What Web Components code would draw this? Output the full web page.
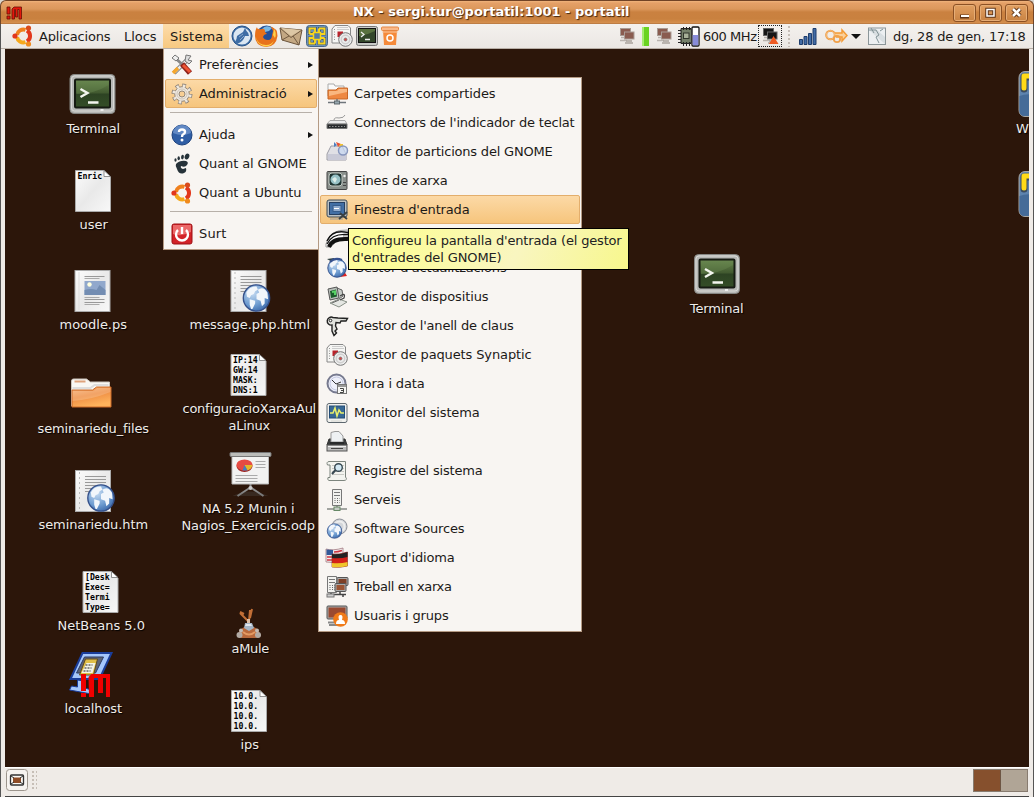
<!DOCTYPE html>
<html lang="ca">
<head>
<meta charset="utf-8">
<title>NX - portatil</title>
<style>
html,body{margin:0;height:100%;overflow:hidden;background:#d9d5cf}
body{font:13px/17px "DejaVu Sans",sans-serif;color:#1c1a18}
</style>
</head>
<body>
<nx-window></nx-window>
<script>
const make = (name, html, ready) => customElements.define(name, class extends HTMLElement {
  constructor(){ super(); this.attachShadow({mode:'open'}).innerHTML = html; }
  connectedCallback(){ if (ready) ready.call(this, this.shadowRoot); }
});

/* Shared drawings */
const page = (inner='') => `<path d="M.5.5H29L35.500 7V41.500H.5Z" fill="url(#pg)" stroke="#aaa"/>${inner}<path d="M29 .5V6.500H35.500Z" fill="#fff" stroke="#777" stroke-width=".8"/>`;
const pgDef = `<defs><linearGradient id="pg" x2="1" y2="1"><stop stop-color="#fcfcfc"/><stop offset=".5" stop-color="#e9e9e9"/><stop offset="1" stop-color="#f8f8f8"/></linearGradient></defs>`;
const mono = lines => `<g font-family="DejaVu Sans Mono,monospace" font-weight="bold" font-size="8.2" fill="#000">${lines.map((l,i)=>`<text x="2.500" y="${9+i*10}">${l}</text>`).join('')}</g>`;
const globe = (x,y,r) => `<g transform="translate(${x} ${y}) scale(${r/10})"><circle r="9.700" fill="url(#gl)" stroke="#35508a" stroke-width="1"/><path d="M-7.500-4Q-5-9 0-8.500L1-6-1-5-2-3-4-2-5 0-7-1ZM-5 1L-1 2-1 4-3 8-4 8-5 5ZM1-6Q5-9 8-4L8.500 1 6 0 6 4 4 6 3 2 0 1 0-3 2-4Z" fill="#f2f6fb"/></g>`;
const glDef = `<defs><radialGradient id="gl" cx=".35" cy=".3" r=".8"><stop stop-color="#c7dcf2"/><stop offset=".6" stop-color="#6d9bd0"/><stop offset="1" stop-color="#3663a5"/></radialGradient></defs>`;
const ubuntu = `<g transform="translate(11.500 11)"><g fill="none" stroke-width="4"><path d="M-6.500-1A6.500 6.500 0 0 1 2-6.200" stroke="#f0801d"/><path d="M3.500-5.500A6.500 6.500 0 0 1 3.500 5.500" stroke="#e2371c"/><path d="M2 6.200A6.500 6.500 0 0 1-6.500 1" stroke="#f5a81c"/></g><circle cx="-8.500" r="2.600" fill="#e2371c"/><circle cx="5" cy="-8" r="2.600" fill="#d94a1c"/><circle cx="5" cy="8" r="2.600" fill="#f08a1d"/></g>`;
const disc = (x,y,r)=>`<circle cx="${x}" cy="${y}" r="${r}" fill="#eee" stroke="#777"/><circle cx="${x}" cy="${y}" r="${r*.62}" fill="none" stroke="#cfcfcf" stroke-width="1.500"/><circle cx="${x}" cy="${y}" r="1.500" fill="#d44" stroke="#777" stroke-width=".8"/>`;
const synaptic = `<path d="M4 .5H17L19.500 3V18H1V4Z" fill="#f6f6f4" stroke="#888"/><path d="M3.500 4V16" stroke="#999" stroke-dasharray="1 1.500"/><path d="M6.500 6.500H12V12H6.500Z" fill="#b9242c"/><path d="M6 4.500H18M6 2.500H17" stroke="#ccc"/>${disc(14.500,14.500,6.800)}`;
const lines = (x,w,ys,c='#999')=>ys.map(y=>`<path d="M${x} ${y}.5H${x+w}" stroke="${c}"/>`).join('');
const wolfGlobe = `<circle cx="11" cy="11" r="10" fill="#3e6da5" stroke="#27548a"/><circle cx="11" cy="11" r="8.600" fill="#dbe7f2"/><path d="M4 17Q6 14 6 11L12 7 14 3 15.500 6Q18 8 18 11L14 11Q12 17 6.500 18.500Z" fill="#3e6da5"/><path d="M8 12L12 9M9 15L13 11" stroke="#9fbad8" stroke-width=".8"/>`;
const netPc = (c,s)=>`<path d="M2 13.500H9M3 10.500H8" stroke="#b9b3ae" stroke-width="1.500"/><rect x="2.500" y="1.500" width="10" height="7" fill="${c}" stroke="${s}"/><rect x="6.500" y="5" width="9.500" height="7" fill="${c}" stroke="${s}"/><path d="M8 14H14M7 16H15" stroke="#a9a29c" stroke-width="1.500"/>`;
const monitor = (x,y,w,h,c)=>`<rect x="${x}" y="${y}" width="${w}" height="${h}" rx="1" fill="#aaa" stroke="#555"/><rect x="${x+1.500}" y="${y+1.500}" width="${w-3}" height="${h-3}" fill="${c}"/>`;
const tower = `<path d="M1.500 .5H10.500V16.500H1.500Z" fill="#f2f2ef" stroke="#777"/><path d="M3 3.500H9M3 6.500H9" stroke="#777"/><path d="M3.500 9.500H9M3.500 11.500H9M3.500 13.500H9" stroke="#666" stroke-dasharray="1 1.500"/>`;

const ART = {
ubuntu:[22,22,ubuntu], wolf:[22,22,wolfGlobe],
firefox:[24,24,`<circle cx="12.500" cy="11.500" r="10" fill="#244f98"/><path d="M8 5Q12 0 18 4L15 7 11 8Z" fill="#77b8e6"/><path d="M3 3Q3 6 8 5 11 4 11 8L13 10Q10 10 9 13 10 16 14 16 18 16 18 11L19 7Q17 2 15 2 24 4 23.500 12 22 23 12 23 1 22 1 12Q1 6 3 3Z" fill="#e8721b"/><path d="M2 13Q4 21 12 21 18 21 20 16 18 23 11 22.500 3 21 2 13ZM20 5Q23 9 21 14L19 11Z" fill="#ffd24b"/>`],
mail:[24,22,`<path d="M1 3L23 5 20 20 3 15Z" fill="#c4a883" stroke="#6b543c"/><path d="M1 3L12 12.500 23 5M3 15L10 11M20 20L14 11" stroke="#715a41" fill="none"/><path d="M2 3L12 11 22 5Z" fill="#ddc7a5"/>`],
vm:[22,22,`<rect x=".5" y=".5" width="21" height="21" rx="3" fill="#6f91b5" stroke="#46678c"/><path d="M3 8V3.500H9.500V7.500M12.500 3.500H18.500V9H14.500M18.500 12.500V18.500H13V14.500M9.500 18.500H3.500V13H7.500M2 8.500H8M14 13.500H20M8.500 14V20M13.500 2V8" fill="none" stroke="#3f5f84" stroke-width="3"/><path d="M3.500 9V3.500H9V7.500M13 3.500H18.500V9H14.500M18.500 13V18.500H13V14.500M9 18.500H3.500V13H7.500M7.500 9H3.500M14.500 13H18.500M9 14.500V18.500M13 7.500V3.500" fill="none" stroke="#f8d51c" stroke-width="1.900"/><rect x="7.500" y="7.500" width="7" height="7" fill="#577ba2" stroke="#f8d51c" stroke-width="1.500"/>`],
synaptic:[22,22,synaptic],
term:[22,20,`<rect x=".5" y=".5" width="21" height="19" rx="2" fill="#c7c9c6" stroke="#777"/><rect x="2.500" y="2.500" width="17" height="14" fill="#33472a" stroke="#111"/><path d="M4 10Q11 9 19 5V3H3V10Z" fill="#58713f"/><path d="M5 6L8 8.500 5 11M9 13.500H14" stroke="#eee" stroke-width="1.300" fill="none"/>`],
trash:[18,20,`<path d="M2 4L3 19H15L16 4Z" fill="#f58a3a"/><rect x=".5" y="1" width="17" height="3.500" rx="1" fill="#f9b888" stroke="#e58642"/><path d="M1 6H17" stroke="#f9c9a3"/><circle cx="9" cy="12" r="3" fill="none" stroke="#fff" stroke-width="1.500"/>`],
net:[18,18,netPc('#8a5c50','#a99c95')], netbad:[18,18,netPc('#161616','#666')+`<path d="M12.500 9L17.500 17H8Z" fill="#ef5a22"/>`],
green:[7,19,`<rect width="7" height="19" fill="#6ad322"/><path d="M1 0V19" stroke="#a5ec72" stroke-width="2"/>`],
cpu:[23,21,`<path d="M4 2.500H14V17.500H4Z" fill="#65705b" stroke="#222"/><path d="M1 4.500H4M1 7.500H4M1 10.500H4M1 13.500H4M1 16.500H4M6.500 1V20M9.500 1V20M12.500 1V20" stroke="#222"/><path d="M5 4H14V16H5Z" fill="#75806a"/><rect x="6.500" y="7" width="5.500" height="5.500" fill="#a7b098" stroke="#30352b"/><rect x="15" y="1" width="7" height="19" rx="1" fill="#fff" stroke="#111" stroke-width="1.300"/><path d="M15.700 9H21.300V19.300H15.700Z" fill="#888cd8"/>`],
bars:[18,17,`<g fill="#416ba5" stroke="#1e3d6c"><path d="M.5 11.500H3.500V16.500H.5ZM5 8.500H8V16.500H5ZM9.500 5.500H12.500V16.500H9.500ZM14 .5H17V16.500H14Z"/></g>`],
key:[23,16,`<g fill="none"><circle cx="5.500" cy="7" r="4.300" stroke="#ec9132" stroke-width="2"/><circle cx="5.500" cy="7" r="4.300" stroke="#fbd5a5" stroke-width=".7"/><path d="M10 5H17V2L22 7.500 17 13V9H11" stroke="#f39b36" fill="#fbd09a" stroke-width="1.500"/><circle cx="12" cy="11" r="3.200" stroke="#f0a04a" stroke-width="1.800"/></g>`],
weather:[18,18,`<rect x=".5" y="1" width="17" height="16.500" fill="#eceff1" stroke="#8c9699"/><path d="M1 3L17 17V10L8 2Z" fill="#d8dee1"/><path d="M0 3H8L11 8 8 10 11 16M3 1L6 6M12 4L15 2" stroke="#819296" fill="none"/>`],
desk:[22,22,`<rect x=".5" y=".5" width="21" height="21" rx="3" fill="#f6f3f0" stroke="#9c958d"/><rect x="4.500" y="6" width="13" height="10" rx="1" fill="#faf8f5" stroke="#333" stroke-width="1.300"/><path d="M7 8.500H15V14H7Z" fill="#8f4c26"/><path d="M5 7L8 9M17 7L14 9M5 15L8 13M17 15L14 13" stroke="#333"/>`],
tools:[22,22,`<path d="M3 19L17 5" stroke="#777" stroke-width="4.500"/><path d="M3.500 18.500L17 5" stroke="#eee" stroke-width="2.500"/><path d="M15 1L20 2 17 6 21 7 18 10 14 7Z" fill="#ddd" stroke="#777"/><path d="M2.500 2.500L12 11" stroke="#888" stroke-width="3"/><path d="M1 4L4 1 8 4 5 7Z" fill="#eee" stroke="#777"/><path d="M11 10L19 19" stroke="#8e221b" stroke-width="5.500"/><path d="M12 11L19 18" stroke="#ee5434" stroke-width="3"/><path d="M7 14L2 19" stroke="#f5a72e" stroke-width="3.500"/>`],
gear:[22,22,`<circle cx="11" cy="11" r="8.500" fill="none" stroke="#92877b" stroke-width="4" stroke-dasharray="3.600 3.070"/><circle cx="11" cy="11" r="7.300" fill="#eee8df" stroke="#92877b"/><circle cx="11" cy="11" r="8" fill="none" stroke="#eee8df" stroke-width="3.200" stroke-dasharray="2.300 3.983" stroke-dashoffset="-.6"/><circle cx="11" cy="11" r="5" fill="none" stroke="#cfc5b8"/><circle cx="11" cy="11" r="3" fill="#f8cf94" stroke="#92877b"/>`],
help:[22,22,`<circle cx="11" cy="11" r="10" fill="#2f5ea5" stroke="#1e437e"/><path d="M2 9A9 8 0 0 1 20 9Q11 13 2 9Z" fill="#6289c4"/><path d="M8 8Q8 5.500 11 5.500 14 5.500 14 8 14 9.500 12 10.500 11 11 11 13" fill="none" stroke="#fff" stroke-width="2.400"/><circle cx="11" cy="16" r="1.500" fill="#fff"/>`],
foot:[22,22,`<g fill="#263239"><path d="M5 11Q9 7 15 8 18 9 16 12 14 15 10 13 9 15 12 16L15 15Q16 19 13 20 8 22 6 16Q4 13 5 11Z"/><ellipse cx="16" cy="3.500" rx="2.200" ry="3" transform="rotate(25 16 3.500)"/><ellipse cx="11.500" cy="4" rx="1.400" ry="2.300" transform="rotate(10 11 4)"/><ellipse cx="7.700" cy="5.300" rx="1.200" ry="2"/><ellipse cx="4.500" cy="7" rx="1.100" ry="1.700"/></g>`],
power:[22,22,`<rect x="1" y="1" width="20" height="20" rx="2" fill="#d22328" stroke="#9f1115"/><path d="M2 2H20V9Q11 14 2 11Z" fill="#eb6868"/><path d="M7 7A6 6 0 1 0 15 7M11 4V11" fill="none" stroke="#fff" stroke-width="2.400"/>`],
share:[22,22,`<path d="M2 1H8L9 3H18V13H2Z" fill="#fafafa" stroke="#aaa"/><path d="M2 16V7H10L12 5H21.500V16Z" fill="#ee8842" stroke="#c86625"/><path d="M3 8H11L13 6H21V9L3 13Z" fill="#f9b780"/><path d="M2 19.500H20M11 16V19" stroke="#6f767b" stroke-width="1.500"/><rect x="8.500" y="18" width="5" height="3" fill="#98a8b0" stroke="#5e686d"/>`],
kbd:[22,22,`<path d="M8 8Q8 5 13 6 18 6 19 3" fill="none" stroke="#999"/><path d="M4 8.500H19L21 12H1Z" fill="#eee" stroke="#aaa"/><path d="M1 12H21V16.500H1Z" fill="#282b2d" stroke="#777"/><path d="M3 14.500H19" stroke="#aaa" stroke-dasharray="1.500 1.500" stroke-width=".8"/>`],
part:[22,22,`<path d="M3 9L5 5H16L20 13V19H1V13Z" fill="#e0e0e5" stroke="#9c9ca5"/><path d="M2 13H20V19H2Z" fill="#c9cad7"/><path d="M8 1L11 4 8 6Z" fill="#4e7ec0"/><path d="M10 1L15 3 12 6Z" fill="#e85135"/><path d="M14 3H17V6L13 6Z" fill="#f2c22f"/><circle cx="17" cy="9.500" r="4.500" fill="#c7d8f1bb" stroke="#8796bd" stroke-width="1.500"/>`],
nettool:[22,22,`<rect x="1" y="1.500" width="20" height="18" rx="1" fill="#8a908c" stroke="#444"/><rect x="3" y="3" width="13" height="13" rx="3" fill="#1f3432" stroke="#c0c6c1"/><circle cx="9.500" cy="9.500" r="5" fill="#96c0c5"/><path d="M6 9L9 7 11 9 9 13Z" fill="#ddeeea"/><circle cx="18.500" cy="6" r="1.200" fill="#eee"/><path d="M17 12.500H20M17 15.500H20" stroke="#444"/>`],
login:[22,22,`<rect x="1" y="1" width="20" height="17" rx="2" fill="#b9c0c4" stroke="#3f4b54"/><rect x="3.500" y="3.500" width="15" height="12" fill="#426fa5" stroke="#263f61"/><rect x="7" y="6.500" width="8" height="6" fill="#8faacd" stroke="#365c8b"/><path d="M8 9.500H13" stroke="#fff"/><path d="M4 20H17" stroke="#999"/><path d="M13 20L21 13M14 14L21 20" stroke="#393f42" stroke-width="1.800"/>`],
arcs:[22,22,`<path d="M0 16Q3 1 22 2V6L17 8H22V11H12L5 19H0Z" fill="#fff" stroke="#999"/><g fill="none" stroke="#111"><path d="M1 13Q6 1 22 4.500" stroke-width="1.500"/><path d="M1 16Q6 5 22 6.500" stroke-width="1.300"/><path d="M3 19Q6 10 22 11" stroke-width="4"/></g>`],
update:[22,22,`${glDef}<path d="M1 2L8 1 8 6Z" fill="#344"/><path d="M14 20L21 19 18 14Z" fill="#d22"/>${globe(11,11,9.500)}<path d="M4 5Q9 0 16 3" stroke="#36518e" fill="none" stroke-width="2"/>`],
device:[22,22,`<path d="M11 2L16 4 17 10 13 13" fill="#c7cbc7" stroke="#606060"/><path d="M2 3L11 1 13 12 4 14Z" fill="#b9bfba" stroke="#555"/><path d="M4 5L10 3.500 11 10.500 5 12Z" fill="#1a5c2a"/><path d="M6 6L9 5.500V9" stroke="#58d266" stroke-width="2" fill="none"/><path d="M4 17L13 13 21 16 13 21Z" fill="#e5e7e3" stroke="#889087"/><path d="M6 17L13 14" stroke="#666"/><path d="M14 10Q20 6 18 12L14 14" fill="none" stroke="#444" stroke-width="1.200"/>`],
keys:[22,22,`<path d="M7 2.500A4 4 0 1 0 6 10L6 16 8 20.500 10.500 18 9 16 11 14 9.500 11 10 7.500 14 8 15 6 20 6 21.500 3.500 12 3Z" fill="#e1e2dd" stroke="#222" stroke-width="1.400"/><circle cx="4.500" cy="5.500" r="1.300" fill="#fff" stroke="#222"/>`],
clock:[22,22,`<circle cx="10.500" cy="10.500" r="9" fill="#eef0fa" stroke="#777a8f" stroke-width="2"/><circle cx="10.500" cy="10.500" r="6.500" fill="none" stroke="#c4c8e2"/><path d="M6 7L10 11 15 9" stroke="#333" fill="none"/><rect x="11.500" y="11.500" width="9" height="9" fill="#f6f6f3" stroke="#777"/><path d="M12 13H20" stroke="#999" stroke-width="2"/><path d="M14 15.500H17.500V19.500H14M15 17.500H17" stroke="#444" fill="none"/>`],
sysmon:[22,22,`<rect x="1" y="1.500" width="20" height="19" rx="2" fill="#f1f1ee" stroke="#5d676e"/><rect x="3.500" y="4" width="15" height="12" fill="#376894" stroke="#244d77"/><path d="M4 11H7L9 6 11 14 13 8 15 11H18" stroke="#e9ef6b" stroke-width="1.500" fill="none"/><path d="M5 19H16" stroke="#d5d6d2"/>`],
print:[22,22,`<path d="M3 8H19L21 14H1Z" fill="#393b3c" stroke="#333"/><path d="M5 1.500Q9 0 13 .5L17 5V11H5Z" fill="#eef1f3" stroke="#999"/><path d="M4 11H18V14H4Z" fill="#292b2c"/><rect x="1" y="14" width="20" height="6" fill="#bbb" stroke="#555"/><path d="M2 15.500H20" stroke="#eee"/><path d="M5 17.500H17" stroke="#444"/>`],
log:[22,22,`<path d="M3 1.500H19.500V17Q22 20 18 20.500H3Q1 20 2 17.500H4V5H1.500Q0 2 3 1.500Z" fill="#f3f4ef" stroke="#7d857e"/>${lines(6,12,[5,8,11,14],'#c8c9c4')}<circle cx="12.500" cy="7.500" r="3.800" fill="#d3e9f3" stroke="#374851" stroke-width="1.400"/><path d="M9.500 10L6 14" stroke="#374851" stroke-width="2"/>`],
server:[22,22,`<g transform="translate(5)">${tower}</g><path d="M1 20H21M11 17V20" stroke="#858985" stroke-width="1.500"/><rect x="8" y="18" width="6" height="3.500" fill="#c4cbc4" stroke="#686"/>`],
sources:[22,22,`${glDef}<circle cx="13.500" cy="8.500" r="7.500" fill="#d3d6da" stroke="#8b8e97"/><circle cx="13.500" cy="8.500" r="5" fill="none" stroke="#eee" stroke-width="2"/>${globe(8.500,13,7.500)}`],
flags:[22,22,`<path d="M0 2Q7 4 17 1V15Q7 16 0 15Z" fill="#eee" stroke="#9a6971" stroke-width=".7"/><path d="M1 10H7M1 13H7M8 5Q12 5 16 3.500" stroke="#cf3442" stroke-width="1.500" fill="none"/><path d="M.5 2.500L7 3V8L.5 8Z" fill="#315998"/><path d="M6 7Q13 8 21.500 5V19Q14 21 6 20Z" fill="#d42018" stroke="#8a372e" stroke-width=".7"/><path d="M6 7Q13 8 21.500 5V10Q14 12 6 11Z" fill="#222"/><path d="M6 16Q14 17 21.500 15V19Q14 21 6 20Z" fill="#efc42b"/>`],
network:[23,22,`${monitor(11,1.500,11,8,'#7e4026')}${tower}${monitor(9,7.500,11,8,'#9b5534')}<path d="M2 18.500H20M14 16V18M5 17V20M17 18V21" stroke="#444" stroke-width="1.500"/><rect x="1" y="18" width="7" height="3" fill="#ccc" stroke="#777"/>`],
users:[22,22,`${monitor(1,1,20,13,'#9a4930')}<path d="M2 17.500H12M3 20H12" stroke="#888" stroke-width="2"/><circle cx="14.500" cy="14.500" r="7.300" fill="#f07a18"/><path d="M10 19Q10 15 13 15 11.500 10 14.500 10 17.500 10 16 15 19 15 19 19Z" fill="#fff"/>`],
bigterm:[46,40,`<defs><linearGradient id="tg" x2="0" y2="1"><stop stop-color="#6a8850"/><stop offset=".48" stop-color="#41592f"/><stop offset=".52" stop-color="#2d4323"/><stop offset="1" stop-color="#344e27"/></linearGradient></defs><rect x=".5" y=".5" width="45" height="39" rx="4" fill="#b7b8b6" stroke="#858683"/><rect x="2" y="2" width="42" height="35" rx="3" fill="none" stroke="#d8d9d6"/><rect x="5.500" y="5.500" width="35" height="28" rx="1" fill="url(#tg)" stroke="#161b13" stroke-width="2"/><path d="M7 20Q25 20 39 11V7H7Z" fill="#698850" opacity=".45"/><path d="M11 15L18 19 11 23M18.500 28.500H29" fill="none" stroke="#f4f6ef" stroke-width="2.400"/><path d="M31 36H34" stroke="#eee" stroke-width="2"/>`],
user:[36,42,pgDef+page(mono(['Enric']))],
ps:[36,42,`${pgDef}<rect x=".5" y=".5" width="35" height="41" fill="url(#pg)" stroke="#aaa"/>${lines(10,20,[6,29,32],'#999')}${lines(10,15,[8,27,34],'#aaa')}<rect x="10" y="11" width="21" height="14" fill="#91a8cc"/><path d="M10 20Q17 18 22 20L25 15 31 20V25H10Z" fill="#738db2"/><circle cx="15" cy="14.500" r="2.200" fill="#ffffdf"/><path d="M4.500 2V40" stroke="#ddd"/>`],
folder:[42,30,`<defs><linearGradient id="fo" x2=".4" y2="1"><stop stop-color="#f7b47b"/><stop offset=".5" stop-color="#ef8f45"/><stop offset="1" stop-color="#ffb35c"/></linearGradient></defs><path d="M1 28V3Q1 1 3 1H16L20 4H39V20Z" fill="#f9f7f3" stroke="#ccc5bd"/><path d="M4 3.500H15" stroke="#dea37c" stroke-width="2"/><path d="M2 10H20L24 7H38" stroke="#ddd" stroke-width="2" fill="none"/><path d="M1.500 29V12H22L26 9H40.500V29Z" fill="url(#fo)" stroke="#cc6a28"/><path d="M2 23Q20 22 40 14V10H27L23 13H2Z" fill="#fff" opacity=".18"/>`],
html:[41,42,`${pgDef}${glDef}<rect x=".5" y=".5" width="35" height="41" fill="url(#pg)" stroke="#aaa"/>${lines(10,21,[6,9,12,15,18,21],'#999')}<path d="M4.500 2V40" stroke="#bbb" stroke-dasharray="2 3"/>${globe(26,28,13.600)}`],
conf:[36,42,pgDef+page(mono(['IP:14','GW:14','MASK:','DNS:1']))],
nb:[36,42,pgDef+page(mono(['[Desk','Exec=','Termi','Type=']))],
ips:[36,42,pgDef+page(mono(['10.0.','10.0.','10.0.','10.0.']))],
odp:[42,45,`<path d="M21 32V37M20 36L8 44M22 36L34 44" stroke="#8b8b8b" stroke-width="2"/><path d="M3 44Q21 35 39 44Z" fill="#555" opacity=".3"/><path d="M2.500 3H39V32H2.500Z" fill="#f2f2f1" stroke="#bbb"/><rect x=".5" y=".5" width="41" height="4" rx="1" fill="#bbbcb9" stroke="#777"/><ellipse cx="15" cy="14" rx="8" ry="6" fill="#9c211d"/><ellipse cx="15" cy="13" rx="8" ry="5.500" fill="#e64b43"/><path d="M15 13L23 13Q22 17 18 18.500Z" fill="#e5b92a"/><path d="M15 13L18 18.500 13 18.500Z" fill="#437fc0"/>${lines(26,10,[9,12,15],'#aaa')}${lines(6,22,[23,26,29],'#aaa')}<circle cx="21" cy="36" r="2" fill="#ccc"/>`],
mule:[26,31,`<path d="M4 5L12 13M14 2L13 13M4 4L8 6M16 1L14 10" stroke="#c26f36" stroke-width="2" fill="none"/><path d="M11 11H14V17H11Z" fill="#ddc0a8"/><path d="M4 22Q8 18 13 19 19 18 22 22L25 28 20 30H5L1 28Z" fill="#b9693c"/><path d="M9 15H16L18 20 13 23 8 20Z" fill="#a5b5c5"/><path d="M10 16H15L16 18H9Z" fill="#e2e7ee"/><circle cx="3.500" cy="27" r="3" fill="#b2aaa4"/><circle cx="22" cy="27" r="3" fill="#b2aaa4"/><circle cx="5" cy="22.500" r="2" fill="#c2bab4"/><circle cx="21" cy="22.500" r="2" fill="#c2bab4"/><path d="M7 24Q13 29 19 24" stroke="#e49a63" stroke-width="2" fill="none"/>`],
local:[46,47,`<path d="M14 2H43L31 28H2Z" fill="#a5c6fb" stroke="#1a3d9a" stroke-width="2"/><path d="M16 6H35L27 22H8Z" fill="#5f6576" stroke="#2c3c65"/><path d="M17 8H29L25 24H11Z" fill="#e1bf48" stroke="#604a1e"/><path d="M18 12H27L24 22H13Z" fill="#f4f4e7"/><path d="M17 14H24M16 17H23M15 20H22" stroke="#222" stroke-dasharray="2 1"/><path d="M9 29L16 30 13 36 23 39V43L1 39 3 35 9 36Z" fill="#a5c6fb" stroke="#1a3d9a"/><path d="M12.500 23H17.500V40H12.500ZM12.500 42H17.500V46H12.500ZM20 26L23 23H41.500V46H37.500V27H34.500V42H29.500V27H25.500V46H20.500Z" fill="#f00000"/>`],
win:[30,46,`<rect x=".5" y=".5" width="40" height="45" rx="6" fill="#5d83ae" stroke="#aaa7a1"/><path d="M1 25Q10 22 30 24V45H6Q1 45 1 40Z" fill="#456b98"/><path d="M5.500 18V6H22" fill="none" stroke="#3a4a5d" stroke-width="7" stroke-linejoin="round" stroke-linecap="round"/><path d="M5.500 17V5H22" fill="none" stroke="#ffda18" stroke-width="5" stroke-linejoin="round" stroke-linecap="round"/>`],
logo:[18,14,`<path d="M1 1H4V8H1ZM1 10H4V13H1ZM6 3L8 1H15.500V13H13V3.500H11.700V11H9.500V3.500H8.500V13H6Z" fill="#e3170c" stroke="#671006" stroke-width=".8"/>`]
};

/* One drawing out of the ART table, at its own size */
make('nx-icon', `<style>:host{display:block;flex:none;line-height:0;text-shadow:none}svg{display:block;overflow:visible}</style><div></div>`, function(r){
  const [w,h,s] = ART[this.getAttribute('name')];
  r.querySelector('div').innerHTML = `<svg xmlns="http://www.w3.org/2000/svg" width="${w}" height="${h}" viewBox="0 0 ${w} ${h}">${s}</svg>`;
});

/* A text run with a set advance width: the tracking is worked out from the natural width */
make('nx-text', `<style>:host{display:block;flex:none;white-space:pre}span{display:inline-block}</style><span><slot></slot></span>`, function(r){
  const s = r.querySelector('span'), w = +this.getAttribute('w');
  const n = this.textContent.length, nat = s.getBoundingClientRect().width;
  if (w && nat) { s.style.letterSpacing = ((w + .5 - nat)/n).toFixed(3)+'px'; this.style.width = w+'px'; }
});

make('nx-row', `<style>
:host{display:flex;align-items:center;height:29px;box-sizing:border-box;padding:0 4px 0 5px;border:1px solid transparent;border-radius:2px}
:host([on]){background:linear-gradient(#fcd9a6,#f6c57d);border-color:#e3ae6c}
#ic{width:22px;margin-right:6px}
i{margin-left:auto;border:solid transparent;border-width:3.5px 0 3.5px 5px;border-left-color:#111}
:host(:not([sub])) i{display:none}
:host([sub]) i{margin-right:-1px}
</style><span id="ic"></span><slot></slot><i></i>`, function(r){
  r.getElementById('ic').innerHTML = `<nx-icon name="${this.getAttribute('icon')}"></nx-icon>`;
});

make('nx-menu', `<style>:host{display:block;box-sizing:border-box;background:#f8f5f2;border:1px solid #b49a84;padding:1px 1px}</style><slot></slot>`);
make('nx-rule', `<style>:host{display:block;height:12px;box-sizing:border-box;padding:4px 5px 0}div{border-top:1px solid #b7b0a9}</style><div></div>`);

make('nx-tip', `<style>:host{display:block;box-sizing:border-box;padding:3px;border:1px solid #000;color:#222;background:linear-gradient(115deg,#fcfc9a 20%,#f9f6c0 60%,#f7f78c)}</style><slot></slot>`);

/* Desktop launcher: a drawing above a centred caption */
make('nx-item', `<style>
:host{position:absolute;display:flex;flex-direction:column;align-items:center;width:140px;color:#f0ece8;text-shadow:1px 1px 1px #000}
#ic{margin-bottom:var(--gap,4px);transform:translateX(var(--dx,0px))}
</style><div id="ic"></div><slot></slot>`, function(r){
  r.getElementById('ic').innerHTML = `<nx-icon name="${this.getAttribute('icon')}"></nx-icon>`;
});

make('nx-title', `<style>
:host{display:grid;grid-template-columns:1fr auto 1fr;align-items:center;height:24px;box-sizing:border-box;padding:0 5px 0 5px;border:solid #714325;border-width:1px 1px 0;border-radius:6px 6px 0 0;
background:linear-gradient(#f0b47c 0,#e5a067 2px,#dc985c 8px,#ca8140 11px,#c9813f 18px,#d6904f 22px,#a66a39);color:#fff;font-weight:bold;text-shadow:1px 1px 1px #432510}
nx-text{margin-right:52px;margin-top:-2px}
.b{display:flex;gap:3px;justify-content:flex-end}
.b div{width:23px;height:18px;box-sizing:border-box;border:1px solid #8c5124;border-radius:3px;background:linear-gradient(#e2a062,#c98343);box-shadow:inset 0 0 0 1px #e6ad76}
svg{display:block;margin:0}
</style><nx-icon name="logo"></nx-icon><nx-text w="276">NX - sergi.tur@portatil:1001 - portatil</nx-text>
<div class="b"><div><svg width="21" height="16"><path d="M6 11.500H15" stroke="#5e3518" stroke-width="4"/><path d="M7 11H15" stroke="#fff" stroke-width="2"/></svg></div><div><svg width="21" height="16"><path d="M7 4.500H14V11H7Z" fill="none" stroke="#5e3518" stroke-width="3.500"/><path d="M7 4.500H14V11H7Z" fill="none" stroke="#fff" stroke-width="1.500"/></svg></div><div><svg width="21" height="16"><path d="M7 4L14 11M14 4L7 11" stroke="#5e3518" stroke-width="4.500"/><path d="M7 4L14 11M14 4L7 11" stroke="#fff" stroke-width="2.500"/></svg></div></div>`);

make('nx-panel', `<style>
:host{display:flex;align-items:center;height:25px;box-sizing:border-box;background:linear-gradient(#f4f1ee,#ebe7e3);border-bottom:1px solid #b8afa6;padding:0 8px 0 12px}
.m{height:24px;display:flex;align-items:center;box-sizing:border-box}
.on{background:linear-gradient(#fddcaa,#f7c981);padding:0 6px 0 7px;margin-left:7px;width:66px}
nx-icon{margin-left:var(--l,0)}
.right{margin-left:auto;display:flex;align-items:center}
.sel{width:24px;height:22px;margin-left:2px;box-sizing:border-box;border:1px dotted #222;display:flex;align-items:center;justify-content:center}
.dots{width:4px;height:22px;margin-left:5px;background:radial-gradient(circle,#c5bdb6 .7px,transparent 1px) 0 0/4px 4px}
.tri{border:solid transparent;border-width:5px 5px 0;border-top-color:#111;margin-left:3px}
</style>
<nx-icon name="ubuntu"></nx-icon><nx-text style="margin-left:5px" w="71">Aplicacions</nx-text><nx-text style="margin-left:14px" w="32">Llocs</nx-text>
<div class="m on"><nx-text w="53">Sistema</nx-text></div>
<nx-icon style="--l:2px" name="wolf"></nx-icon><nx-icon style="--l:1px" name="firefox"></nx-icon><nx-icon style="--l:1px" name="mail"></nx-icon><nx-icon style="--l:3px" name="vm"></nx-icon><nx-icon style="--l:3px" name="synaptic"></nx-icon><nx-icon style="--l:3px" name="term"></nx-icon><nx-icon style="--l:3px" name="trash"></nx-icon>
<div class="right"><nx-icon name="net"></nx-icon><nx-icon style="--l:6px" name="green"></nx-icon><nx-icon style="--l:6px" name="net"></nx-icon><nx-icon style="--l:4px" name="cpu"></nx-icon><nx-text style="margin-left:3px" w="53">600 MHz</nx-text>
<div class="sel"><nx-icon name="netbad"></nx-icon></div><div class="dots"></div><nx-icon style="--l:8px" name="bars"></nx-icon><nx-icon style="--l:8px" name="key"></nx-icon><div class="tri"></div><nx-icon style="--l:7px" name="weather"></nx-icon><nx-text style="margin-left:7px" w="132">dg, 28 de gen, 17:18</nx-text></div>`);

make('nx-taskbar', `<style>
:host{display:flex;align-items:center;height:30px;box-sizing:border-box;background:#efebe7;border-top:1px solid #fff;border-bottom:1px solid #444;padding:0 1px 4px 1px}
.dots{width:6px;height:20px;margin-left:3px;background:radial-gradient(circle,#c5bdb6 .7px,transparent 1px) 0 0/4px 4px}
.ws{margin-left:auto;display:flex;width:55px;height:23px;box-sizing:border-box;border:1px solid #877b6f}
.ws div{flex:1;background:#b0a596}.ws div:first-child{background:#86502d;border-right:1px solid #6d5644}
</style><nx-icon name="desk"></nx-icon><div class="dots"></div><div class="ws"><div></div><div></div></div>`);

const items = [
 ['bigterm',93.5,74,6,-.5,['Terminal',53]],['user',94,170,4,-1,['user',28]],['ps',93.5,270,4,-.5,['moodle.ps',67]],
 ['folder',93.5,378,12,-1.500,['seminariedu_files',111]],['html',93.5,470,4,2,['seminariedu.htm',109]],['nb',101.5,571,4,-.5,['NetBeans 5.0',87]],['local',93.5,651,2,-1.500,['localhost',57]],
 ['html',250,270,4,1.500,['message.php.html',120]],['conf',249.5,354,4,-.5,['configuracioXarxaAul',133],['aLinux',41]],['odp',248.5,452,3,2.500,['NA 5.2 Munin i',92],['Nagios_Exercicis.odp',133]],
 ['mule',250.5,608,1,-1,['aMule',37]],['ips',250,690,4,-1,['ips',18]],['bigterm',717,254,6,0,['Terminal',53]],
 ['win',1024,71,3,9.500,['Wi',15]],['win',1024,171,3,9.500]];
const desktop = items.map(([ic,cx,y,g,dx,...t])=>`<nx-item icon="${ic}" style="left:${cx-5-70.5}px;top:${y-49}px;--gap:${g}px;--dx:${dx}px">${t.map(([s,w])=>`<nx-text w="${w}">${s}</nx-text>`).join('')}</nx-item>`).join('');
const row = ([ic,t,w,x=''])=>`<nx-row icon="${ic}" ${x}><nx-text w="${w}">${t}</nx-text></nx-row>`;
const sub = [['share','Carpetes compartides',141],['kbd',"Connectors de l'indicador de teclat",220],['part','Editor de particions del GNOME',198],['nettool','Eines de xarxa',93],['login',"Finestra d'entrada",115,'on'],['arcs','',0],['update',"Gestor d'actualitzacions",152],['device','Gestor de dispositius',134],['keys',"Gestor de l'anell de claus",159],['synaptic','Gestor de paquets Synaptic',177],['clock','Hora i data',70],['sysmon','Monitor del sistema',125],['print','Printing',48],['log','Registre del sistema',128],['server','Serveis',46],['sources','Software Sources',110],['flags',"Suport d'idioma",100],['network','Treball en xarxa',97],['users','Usuaris i grups',94]];

make('nx-window', `<style>
:host{display:flex;flex-direction:column;position:relative;width:1034px;height:797px;overflow:hidden}
.body{flex:1;display:flex;flex-direction:column;border:solid #555;border-width:0 1px;background:#efebe7;padding:0 4px}
.desk{flex:1;position:relative;overflow:hidden;background:#2c160a}
.main{position:absolute;left:163px;top:49px;width:156px;height:201px;border-top:0}
.sub{position:absolute;left:318px;top:77px;width:264px;height:555px}
.tip{position:absolute;left:348px;top:228px;width:281px;height:42px}
</style>
<nx-title></nx-title>
<div class="body"><nx-panel style="margin:0 -4px;padding-left:11px"></nx-panel><div class="desk">${desktop}</div><nx-taskbar></nx-taskbar></div>
<nx-menu class="main">${row(['tools','Preferències',79,'sub'])}${row(['gear','Administració',87,'sub on'])}<nx-rule></nx-rule>${row(['help','Ajuda',36,'sub'])}${row(['foot','Quant al GNOME',107])}${row(['ubuntu','Quant a Ubuntu',102])}<nx-rule></nx-rule>${row(['power','Surt',27])}</nx-menu>
<nx-menu class="sub">${sub.map(row).join('')}</nx-menu>
<nx-tip class="tip"><nx-text w="269">Configureu la pantalla d'entrada (el gestor</nx-text><nx-text w="149">d'entrades del GNOME)</nx-text></nx-tip>`);
</script>
</body>
</html>
